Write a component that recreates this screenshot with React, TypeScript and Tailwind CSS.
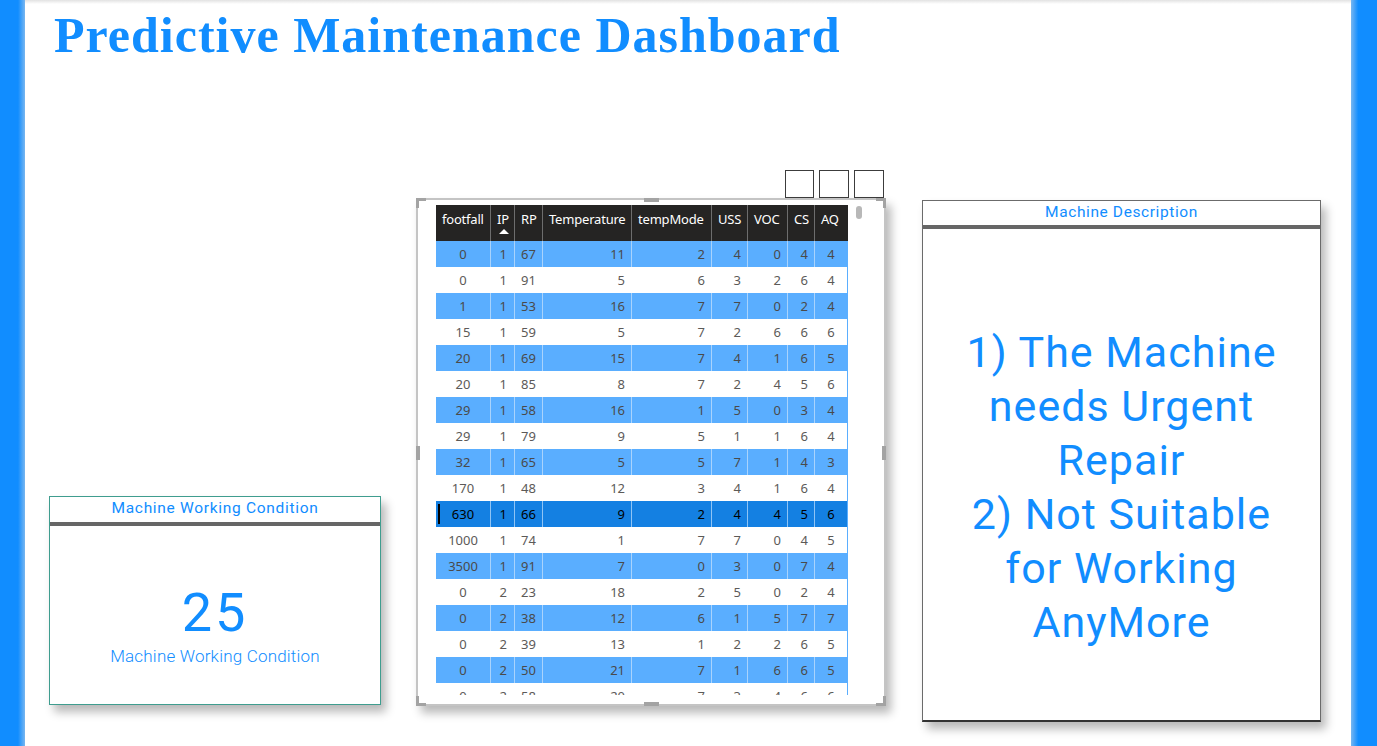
import React from "react";

const rows: number[][] = [
  [0, 1, 67, 11, 2, 4, 0, 4, 4],
  [0, 1, 91, 5, 6, 3, 2, 6, 4],
  [1, 1, 53, 16, 7, 7, 0, 2, 4],
  [15, 1, 59, 5, 7, 2, 6, 6, 6],
  [20, 1, 69, 15, 7, 4, 1, 6, 5],
  [20, 1, 85, 8, 7, 2, 4, 5, 6],
  [29, 1, 58, 16, 1, 5, 0, 3, 4],
  [29, 1, 79, 9, 5, 1, 1, 6, 4],
  [32, 1, 65, 5, 5, 7, 1, 4, 3],
  [170, 1, 48, 12, 3, 4, 1, 6, 4],
  [630, 1, 66, 9, 2, 4, 4, 5, 6],
  [1000, 1, 74, 1, 7, 7, 0, 4, 5],
  [3500, 1, 91, 7, 0, 3, 0, 7, 4],
  [0, 2, 23, 18, 2, 5, 0, 2, 4],
  [0, 2, 38, 12, 6, 1, 5, 7, 7],
  [0, 2, 39, 13, 1, 2, 2, 6, 5],
  [0, 2, 50, 21, 7, 1, 6, 6, 5],
  [0, 2, 58, 20, 7, 3, 4, 6, 6],
];

const headers = ["footfall", "IP", "RP", "Temperature", "tempMode", "USS", "VOC", "CS", "AQ"];
const aligns = [
  "text-center",
  "text-right pr-[7px]",
  "text-center",
  "text-right pr-[6px]",
  "text-right pr-[6px]",
  "text-right pr-[6px]",
  "text-right pr-[6px]",
  "text-right pr-[6px]",
  "text-center",
];

const gridCols = "grid grid-cols-[55px_24px_28px_89px_80px_36px_40px_27px_32px]";

function DataTable() {
  return (
    <div className="flex flex-col h-[490px] w-[412px] overflow-hidden font-['Noto_Sans',sans-serif] text-[13px]">
      <div className={`${gridCols} h-[36px] bg-[#252423] text-white shrink-0`}>
        {headers.map((h, i) => (
          <div
            key={h}
            className={`relative pl-[6px] pt-[6px] leading-[16px] whitespace-nowrap tracking-[-0.2px] ${
              i < headers.length - 1 ? "border-r border-[#6d6d6d]" : ""
            }`}
          >
            {h}
            {h === "IP" && (
              <svg className="absolute left-[8px] top-[24px]" width="10" height="5" viewBox="0 0 10 5">
                <polygon points="0,5 5,0 10,5" fill="#ffffff" />
              </svg>
            )}
          </div>
        ))}
      </div>
      <div className="flex flex-col border-r border-[#5aaeff]">
        {rows.map((r, ri) => {
          const selected = ri === 10;
          const blue = ri % 2 === 0;
          const rowBg = selected ? "bg-[#1480e2] text-black" : blue ? "bg-[#5aaeff] text-[#4a4a4a]" : "bg-white text-[#5c5a58]";
          const sep = selected ? "border-[#8fc4f5]" : blue ? "border-[#a9d3fc]" : "border-transparent";
          return (
            <div key={ri} className={`${gridCols} h-[26px] shrink-0 relative ${rowBg}`}>
              {selected && <div className="absolute left-[2px] top-[3px] w-[2px] h-[20px] bg-black" />}
              {r.map((v, ci) => (
                <div
                  key={ci}
                  className={`leading-[26px] ${aligns[ci]} ${ci < r.length - 1 ? `border-r ${sep}` : ""}`}
                >
                  {v}
                </div>
              ))}
            </div>
          );
        })}
      </div>
    </div>
  );
}

function TableVisual() {
  return (
    <div className="flex flex-col w-[470px]">
      <div className="flex justify-end gap-[5px] pr-[2px] h-[28px]">
        <div className="w-[29px] h-[28px] border-[1.5px] border-[#3c3c3c] bg-white" />
        <div className="w-[30px] h-[28px] border-[1.5px] border-[#3c3c3c] bg-white" />
        <div className="w-[30px] h-[28px] border-[1.5px] border-[#3c3c3c] bg-white" />
      </div>
      <div className="relative h-[508px] border-2 border-[#c4c4c4] bg-white shadow-[5px_7px_9px_rgba(0,0,0,0.28)] flex pl-[18px] pt-[5px] gap-[8px]">
        <DataTable />
        <div className="w-[6px] h-[13px] rounded-[3px] bg-[#b8b8b8] mt-[1px]" />
        {/* corner marks */}
        <div className="absolute -left-[2px] -top-[2px] w-[10px] h-[10px] border-l-[3px] border-t-[3px] border-[#a3a3a3]" />
        <div className="absolute -right-[2px] -top-[2px] w-[10px] h-[10px] border-r-[3px] border-t-[3px] border-[#a3a3a3]" />
        <div className="absolute -left-[2px] -bottom-[2px] w-[10px] h-[10px] border-l-[3px] border-b-[3px] border-[#a3a3a3]" />
        <div className="absolute -right-[2px] -bottom-[2px] w-[10px] h-[10px] border-r-[3px] border-b-[3px] border-[#a3a3a3]" />
        {/* mid handles */}
        <div className="absolute left-[226px] -top-[2px] w-[15px] h-[4px] bg-[#a3a3a3]" />
        <div className="absolute left-[226px] -bottom-[2px] w-[15px] h-[4px] bg-[#a3a3a3]" />
        <div className="absolute -left-[2px] top-[246px] w-[4px] h-[14px] bg-[#a3a3a3]" />
        <div className="absolute -right-[2px] top-[246px] w-[4px] h-[14px] bg-[#a3a3a3]" />
      </div>
    </div>
  );
}

export default function App() {
  return (
    <div className="flex w-[1377px] h-[746px] overflow-hidden bg-white">
      <div className="w-[25px] shrink-0 bg-[linear-gradient(to_right,#118dff_72%,#78b6f0)]" />
      <div className="flex-1 flex flex-col relative">
        <div className="absolute left-0 right-0 top-0 h-[4px] bg-[linear-gradient(to_bottom,#e2e2e2,#ffffff)]" />
        <div className="h-[70px] pl-[29px] pt-[5px] shrink-0">
          <h1 className="font-['Liberation_Serif',serif] font-bold text-[50px] leading-[60px] text-[#118dff] tracking-[1px]">
            Predictive Maintenance Dashboard
          </h1>
        </div>
        <div className="flex items-start">
          {/* Machine working condition card */}
          <div className="ml-[24px] mt-[426px] w-[332px] h-[209px] border border-[#3f9d8f] bg-white shadow-[5px_7px_9px_rgba(0,0,0,0.28)] flex flex-col font-['Roboto',sans-serif] text-[#118dff]">
            <div className="h-[25px] text-center text-[15.5px] leading-[22px] tracking-[0.7px]">Machine Working Condition</div>
            <div className="h-[4px] bg-[#666666]" />
            <div className="flex-1 flex flex-col items-center justify-center pt-[22px]">
              <div className="text-[54px] leading-[56px] tracking-[3px] font-normal">25</div>
              <div className="text-[17px] leading-[22px] font-light mt-[4px] tracking-[0.2px]">Machine Working Condition</div>
            </div>
          </div>

          <div className="ml-[35px] mt-[100px]">
            <TableVisual />
          </div>

          {/* Machine description card */}
          <div className="ml-[36px] mt-[130px] w-[399px] h-[522px] border-[1.5px] border-[#6b6b6b] border-b-2 border-b-[#333333] bg-white shadow-[5px_7px_9px_rgba(0,0,0,0.28)] flex flex-col font-['Roboto',sans-serif] text-[#118dff]">
            <div className="h-[24px] text-center text-[15.5px] leading-[22px] tracking-[0.6px]">Machine Description</div>
            <div className="h-[4px] bg-[#666666]" />
            <div className="flex-1 flex items-center justify-center pt-[24px]">
              <p className="text-center text-[43px] leading-[54px] tracking-[1px] w-[330px]">
                1) The Machine needs Urgent Repair
                <br />
                2) Not Suitable for Working AnyMore
              </p>
            </div>
          </div>
        </div>
      </div>
      <div className="w-[26px] shrink-0 bg-[linear-gradient(to_right,#78b6f0,#118dff_28%)]" />
    </div>
  );
}
